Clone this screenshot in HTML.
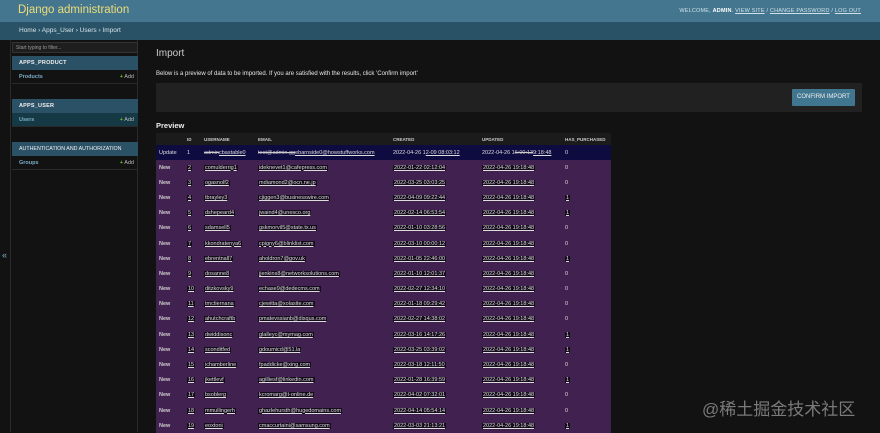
<!DOCTYPE html>
<html><head><meta charset="utf-8"><style>
*{margin:0;padding:0;box-sizing:border-box}
body{width:880px;height:432px;overflow:hidden;background:#121212;font-family:"Liberation Sans",sans-serif;color:#eee;position:relative}
.hdr{position:absolute;left:0;top:0;width:880px;height:22px;background:#44778f}
.hdr .t{position:absolute;left:18px;top:4px;font-size:11.5px;color:#eedc7a;font-weight:normal}
.hdr .u{position:absolute;right:19px;top:8px;font-size:5.5px;color:#cfe0e8;letter-spacing:.2px}
.bc{position:absolute;left:0;top:22px;width:880px;height:18px;background:#295266;font-size:6.5px;color:#d8e4ea;padding:5px 0 0 19px}
.side{position:absolute;left:10px;top:40px;width:128px;height:392px;border-left:1px solid #2a2a2a;border-right:1px solid #2a2a2a}
.flt{position:absolute;left:1px;top:2px;width:126px;height:11px;background:#1e1e1e;border:1px solid #333;font-size:5px;color:#999;padding:2px 3px}
.cap{position:absolute;left:1px;width:126px;height:14px;background:#2b5166;font-size:5.5px;color:#f0f0f0;padding:4px 7px;font-weight:bold;letter-spacing:.2px;white-space:nowrap;overflow:hidden}
.row{position:absolute;left:1px;width:126px;height:14px;border-bottom:1px solid #2a2a2a;font-size:5.5px;color:#79aec8;font-weight:bold;padding:4px 7px}
.row b{position:absolute;right:4px;top:4px;color:#bbb;font-weight:normal}
.row b i{color:#70bf2b;font-style:normal;font-weight:bold}
.h1{position:absolute;left:156px;top:48px;font-size:10px;color:#ccc}
.p{position:absolute;left:156px;top:71px;font-size:6px;color:#e6e6e6}
.sub{position:absolute;left:156px;top:83px;width:706px;height:29px;background:#212121}
.btn{position:absolute;left:792px;top:89px;width:63px;height:17px;background:#417690;font-size:6px;line-height:17px;color:#f0f0f0;text-align:center;border-radius:1px;white-space:nowrap}
.pv{position:absolute;left:156px;top:121px;font-size:7.5px;font-weight:bold;color:#eee}
table{position:absolute;left:156px;top:133px;width:455px;border-collapse:collapse;font-size:5.5px}
td,th{padding:0 0 0 3px;white-space:nowrap;text-align:left}
th{height:12px;background:#1b1b1b;font-size:4.5px;color:#ccc;font-weight:bold}
tr.up td{background:#0d0b3f;height:15px;color:#ddd}
tr.n td{background:#41214f;height:15.2px;color:#ddd}
tr.n td:not(:first-child):not(:last-child) span, tr.n td:last-child span{text-decoration:underline;background:#150c1c;padding:0 1px}
tr.n td:first-child{font-weight:bold;color:#ccc}
s{color:#ccc}
.wm{position:absolute;left:702px;top:395px;font-size:17px;color:#7a7a7a;font-family:"Liberation Sans","Noto Sans CJK SC",sans-serif}
.tg{position:absolute;left:2px;top:250px;font-size:9px;color:#79aec8}
</style></head><body>
<div class="hdr"><div class="t">Django administration</div><div class="u">WELCOME, <b style="color:#fff">ADMIN</b>. <u>VIEW SITE</u> / <u>CHANGE PASSWORD</u> / <u>LOG OUT</u></div></div>
<div class="bc">Home › Apps_User › Users › Import</div>
<div class="side">
<div class="flt">Start typing to filter...</div>
<div class="cap" style="top:16px">APPS_PRODUCT</div>
<div class="row" style="top:30px">Products<b><i>+</i> Add</b></div>
<div class="cap" style="top:59px">APPS_USER</div>
<div class="row" style="top:73px;background:#163a45">Users<b><i>+</i> Add</b></div>
<div class="cap" style="top:102px;font-weight:normal;letter-spacing:0;font-size:5.3px">AUTHENTICATION AND AUTHORIZATION</div>
<div class="row" style="top:116px">Groups<b><i>+</i> Add</b></div>
</div>
<div class="tg">«</div>
<div class="h1">Import</div>
<div class="p">Below is a preview of data to be imported. If you are satisfied with the results, click 'Confirm import'</div>
<div class="sub"></div>
<div class="btn">CONFIRM IMPORT</div>
<div class="pv">Preview</div>
<table>
<tr><th style="width:28px"></th><th style="width:17px">ID</th><th style="width:54px">USERNAME</th><th style="width:135px">EMAIL</th><th style="width:89px">CREATED</th><th style="width:83px">UPDATED</th><th>HAS_PURCHASED</th></tr>
<tr class="up"><td>Update</td><td>1</td><td><s>admin</s><u>cbastable0</u></td><td><s>test@admin.gg</s><u>ebarnside0@howstuffworks.com</u></td><td>2022-04-26 1<u>2-09 08:03:12</u></td><td>2022-04-26 1<s>6:00:13</s><u>9:18:48</u></td><td>0</td></tr>
<tr class="n"><td>New</td><td><span>2</span></td><td><span>comulderrig1</span></td><td><span>ideknevet1@cafepress.com</span></td><td><span>2022-01-22 02:12:04</span></td><td><span>2022-04-26 19:18:48</span></td><td>0</td></tr>
<tr class="n"><td>New</td><td><span>3</span></td><td><span>ogasnolf2</span></td><td><span>mdiamond2@ocn.ne.jp</span></td><td><span>2022-03-25 03:03:25</span></td><td><span>2022-04-26 19:18:48</span></td><td>0</td></tr>
<tr class="n"><td>New</td><td><span>4</span></td><td><span>tbrayley3</span></td><td><span>cjiggen3@businesswire.com</span></td><td><span>2022-04-09 09:22:44</span></td><td><span>2022-04-26 19:18:48</span></td><td><span>1</span></td></tr>
<tr class="n"><td>New</td><td><span>5</span></td><td><span>dshepeard4</span></td><td><span>jwaind4@unesco.org</span></td><td><span>2022-02-14 06:53:54</span></td><td><span>2022-04-26 19:18:48</span></td><td><span>1</span></td></tr>
<tr class="n"><td>New</td><td><span>6</span></td><td><span>sdamsell5</span></td><td><span>gskmorvil5@state.tx.us</span></td><td><span>2022-01-10 03:28:56</span></td><td><span>2022-04-26 19:18:48</span></td><td>0</td></tr>
<tr class="n"><td>New</td><td><span>7</span></td><td><span>kkondratenya6</span></td><td><span>cpigny6@blinklist.com</span></td><td><span>2022-03-10 00:00:12</span></td><td><span>2022-04-26 19:18:48</span></td><td>0</td></tr>
<tr class="n"><td>New</td><td><span>8</span></td><td><span>ebrentnall7</span></td><td><span>aholdron7@gov.uk</span></td><td><span>2022-01-05 22:46:00</span></td><td><span>2022-04-26 19:18:48</span></td><td><span>1</span></td></tr>
<tr class="n"><td>New</td><td><span>9</span></td><td><span>dosanne8</span></td><td><span>jjenkins8@networksolutions.com</span></td><td><span>2022-01-10 12:01:37</span></td><td><span>2022-04-26 19:18:48</span></td><td>0</td></tr>
<tr class="n"><td>New</td><td><span>10</span></td><td><span>ditzkovsky9</span></td><td><span>echase9@dedecms.com</span></td><td><span>2022-02-27 12:34:10</span></td><td><span>2022-04-26 19:18:48</span></td><td>0</td></tr>
<tr class="n"><td>New</td><td><span>11</span></td><td><span>tmctiernana</span></td><td><span>cjewitta@xolasite.com</span></td><td><span>2022-01-18 09:29:42</span></td><td><span>2022-04-26 19:18:48</span></td><td>0</td></tr>
<tr class="n"><td>New</td><td><span>12</span></td><td><span>ahutchcraftb</span></td><td><span>pmatevssianb@disqus.com</span></td><td><span>2022-02-27 14:38:02</span></td><td><span>2022-04-26 19:18:48</span></td><td>0</td></tr>
<tr class="n"><td>New</td><td><span>13</span></td><td><span>dwiddisonc</span></td><td><span>glalleyc@mymag.com</span></td><td><span>2022-03-16 14:17:26</span></td><td><span>2022-04-26 19:18:48</span></td><td><span>1</span></td></tr>
<tr class="n"><td>New</td><td><span>14</span></td><td><span>sconditfed</span></td><td><span>gdoumicd@51.la</span></td><td><span>2022-03-25 03:39:02</span></td><td><span>2022-04-26 19:18:48</span></td><td><span>1</span></td></tr>
<tr class="n"><td>New</td><td><span>15</span></td><td><span>ichamberline</span></td><td><span>fpaddicke@xing.com</span></td><td><span>2022-03-18 12:11:50</span></td><td><span>2022-04-26 19:18:48</span></td><td>0</td></tr>
<tr class="n"><td>New</td><td><span>16</span></td><td><span>jkettlevf</span></td><td><span>agilliesf@linkedin.com</span></td><td><span>2022-01-28 16:39:59</span></td><td><span>2022-04-26 19:18:48</span></td><td><span>1</span></td></tr>
<tr class="n"><td>New</td><td><span>17</span></td><td><span>bsoblerg</span></td><td><span>kcromarg@t-online.de</span></td><td><span>2022-04-02 07:32:01</span></td><td><span>2022-04-26 19:18:48</span></td><td>0</td></tr>
<tr class="n"><td>New</td><td><span>18</span></td><td><span>mmullingerh</span></td><td><span>ghazlehursth@hugedomains.com</span></td><td><span>2022-04-14 05:54:14</span></td><td><span>2022-04-26 19:18:48</span></td><td>0</td></tr>
<tr class="n"><td>New</td><td><span>19</span></td><td><span>eoxtoni</span></td><td><span>cmaccurtaini@samsung.com</span></td><td><span>2022-03-03 21:13:21</span></td><td><span>2022-04-26 19:18:48</span></td><td><span>1</span></td></tr>
</table>
<div class="wm">@稀土掘金技术社区</div>
</body></html>
